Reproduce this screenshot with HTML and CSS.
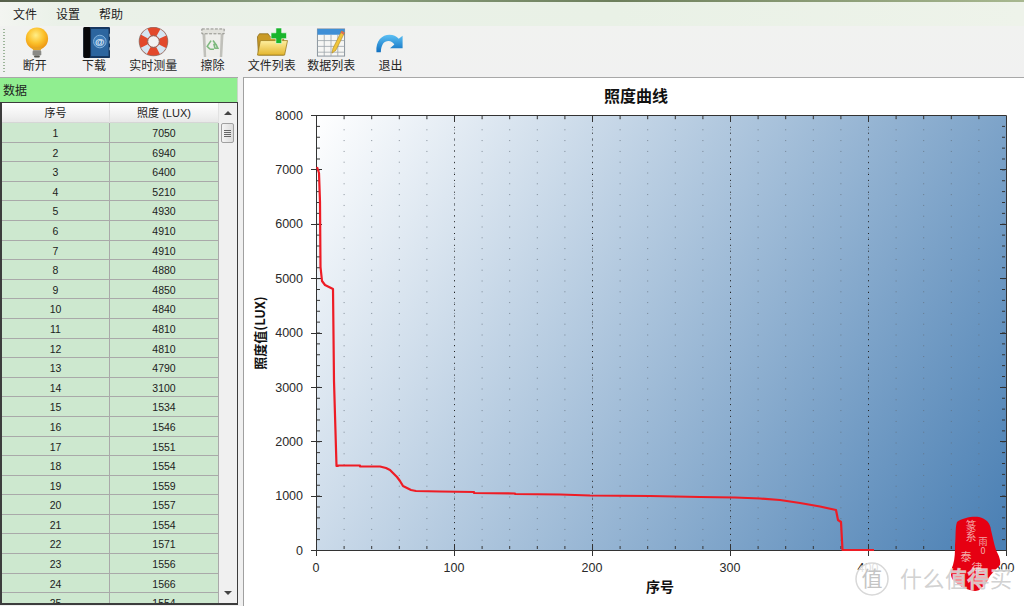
FILE: index.html
```html
<!DOCTYPE html>
<html lang="zh">
<head>
<meta charset="utf-8">
<title>照度曲线</title>
<link rel="stylesheet" href="styles.css">
</head>
<body>
<div class="app">
  <div class="topstrip"></div>
  <nav class="menubar"><span>文件</span><span>设置</span><span>帮助</span></nav>
  <div class="toolbar">
    <div class="grip"></div>
    <div class="tool">
      <svg class="icon" viewBox="0 0 32 32"><defs><radialGradient id="bulb" cx=".45" cy=".35" r=".65"><stop offset="0" stop-color="#ffee88"/><stop offset=".55" stop-color="#fcc22c"/><stop offset="1" stop-color="#ec9410"/></radialGradient></defs><circle cx="18" cy="12" r="11.500" fill="url(#bulb)"/><path d="M13 21h10l-1 3h-8z" fill="#e5a526"/><rect x="13.500" y="24" width="9" height="5.500" rx="1.500" fill="#8a8a86"/><rect x="15" y="29.500" width="6" height="2" rx="1" fill="#55554f"/></svg>
      <span>断开</span>
    </div>
    <div class="tool">
      <svg class="icon" viewBox="-5 0 32 32"><rect x="0" y="0" width="28" height="32" rx="2" fill="#16365e"/><rect x="0" y="0" width="7" height="32" rx="1.500" fill="#08080a"/><rect x="8" y="2" width="18" height="28" fill="#2c659f"/><circle cx="17" cy="15" r="6.500" fill="#3d7cb8" stroke="#86b4dc"/><text class="at" x="17" y="18.500">@</text><path d="M27.500 7v3M27.500 14v3M27.500 21v3" stroke="#a6b6c4" stroke-width="1.500"/></svg>
      <span>下载</span>
    </div>
    <div class="tool">
      <svg class="icon" viewBox="0 0 32 32"><circle cx="16.500" cy="15" r="10.500" fill="none" stroke="#8d7f78" stroke-width="9.500"/><circle cx="16.500" cy="15" r="10.500" fill="none" stroke="#e2492c" stroke-width="8"/><circle cx="16.500" cy="15" r="10.500" fill="none" stroke="#d5e6f2" stroke-width="8" stroke-dasharray="6.500 9.990" stroke-dashoffset="-5"/><circle cx="16.500" cy="15" r="6" fill="#f2f2f2" stroke="#9c5648"/></svg>
      <span>实时测量</span>
    </div>
    <div class="tool">
      <svg class="icon" viewBox="0 0 32 32"><path d="M5 5h22l-1.500 26H6.500z" fill="#eeeeea"/><path d="M5 5l1.500 26h2.500L8 6zM27 5l-1.500 26H23L24 6z" fill="#c0c0ba"/><path d="M4.500 2h23v5h-23z" fill="#e2e2dc" stroke="#8e8e88" stroke-dasharray="3 1.500"/><path d="M16 14l3 4h-2l1 4h3l-2-4M13 23l-3-3 4-6M13 23h4" fill="none" stroke="#7db97d" stroke-width="1.600"/></svg>
      <span>擦除</span>
    </div>
    <div class="tool">
      <svg class="icon" viewBox="0 0 32 32"><defs><linearGradient id="folder" x1="0" y1="0" x2="0" y2="1"><stop offset="0" stop-color="#fff0a0"/><stop offset="1" stop-color="#e3b52e"/></linearGradient></defs><path d="M1 10l2-3h9l2 3h14v19H2z" fill="#c99a26" stroke="#8a6b18" stroke-width=".8"/><path d="M1 29l3-15h28l-3 15z" fill="url(#folder)" stroke="#9a7a1c" stroke-width=".8"/><path d="M20 1h6v5h5v6h-5v5h-6v-5h-5V6h5z" fill="#19b52c" stroke="#fff" stroke-width=".6"/></svg>
      <span>文件列表</span>
    </div>
    <div class="tool">
      <svg class="icon" viewBox="0 0 32 32"><rect x="2" y="2" width="28" height="28" fill="#f6f6f4" stroke="#88929c"/><rect x="2" y="2" width="28" height="6" fill="#3f8fd6"/><path d="M2 14h28M2 20h28M2 26h28M9 8v22M16 8v22M23 8v22" stroke="#9aa2a8" stroke-width=".8"/><path d="M27 4l3 2-9 18-4 3 1-5z" fill="#f0c53c" stroke="#a8821c" stroke-width=".6"/><path d="M27 4l3 2-1 2-3-2z" fill="#e06a5a"/></svg>
      <span>数据列表</span>
    </div>
    <div class="tool">
      <svg class="icon" viewBox="0 0 32 32"><defs><linearGradient id="arrow" x1="0" y1="0" x2="0" y2="1"><stop offset="0" stop-color="#5cc0f4"/><stop offset="1" stop-color="#0f6fc0"/></linearGradient></defs><path d="M2 26C1 14 8 8 15.500 8c4 0 7 1.500 9.500 4l4-3v13H16l4.500-4c-1.500-2-3.500-3.500-6-3.500-5 0-7.500 4-8 11.500z" fill="url(#arrow)"/></svg>
      <span>退出</span>
    </div>
  </div>
  <main class="content">
    <aside class="left">
      <h2 class="left-title">数据</h2>
      <div class="grid-box">
        <div class="grid">
          <div class="row head"><span>序号</span><span>照度 (LUX)</span></div>
          <div class="row"><span>1</span><span>7050</span></div>
          <div class="row"><span>2</span><span>6940</span></div>
          <div class="row"><span>3</span><span>6400</span></div>
          <div class="row"><span>4</span><span>5210</span></div>
          <div class="row"><span>5</span><span>4930</span></div>
          <div class="row"><span>6</span><span>4910</span></div>
          <div class="row"><span>7</span><span>4910</span></div>
          <div class="row"><span>8</span><span>4880</span></div>
          <div class="row"><span>9</span><span>4850</span></div>
          <div class="row"><span>10</span><span>4840</span></div>
          <div class="row"><span>11</span><span>4810</span></div>
          <div class="row"><span>12</span><span>4810</span></div>
          <div class="row"><span>13</span><span>4790</span></div>
          <div class="row"><span>14</span><span>3100</span></div>
          <div class="row"><span>15</span><span>1534</span></div>
          <div class="row"><span>16</span><span>1546</span></div>
          <div class="row"><span>17</span><span>1551</span></div>
          <div class="row"><span>18</span><span>1554</span></div>
          <div class="row"><span>19</span><span>1559</span></div>
          <div class="row"><span>20</span><span>1557</span></div>
          <div class="row"><span>21</span><span>1554</span></div>
          <div class="row"><span>22</span><span>1571</span></div>
          <div class="row"><span>23</span><span>1556</span></div>
          <div class="row"><span>24</span><span>1566</span></div>
          <div class="row"><span>25</span><span>1554</span></div>
        </div>
        <div class="scrollbar">
          <div class="sb-btn"><i class="arrow-up"></i></div>
          <div class="sb-thumb"><i></i><i></i><i></i><i></i></div>
          <div class="sb-track"></div>
          <div class="sb-btn"><i class="arrow-down"></i></div>
        </div>
      </div>
    </aside>
    <section class="chart">
      <svg class="plot" viewBox="244 78 780 528">
        <defs>
          <linearGradient id="bg" gradientUnits="userSpaceOnUse" x1="316" y1="115" x2="996" y2="550"><stop offset="0" stop-color="#ffffff"/><stop offset="1" stop-color="#4b80b4"/></linearGradient>
          <pattern id="dots" patternUnits="userSpaceOnUse" x="316" y="118.500" width="27.600" height="10.800"><rect width="1" height="1" fill="#5f6a76" fill-opacity=".75"/></pattern>
          <pattern id="ytick" patternUnits="userSpaceOnUse" x="0" y="115" width="10" height="10.875"><rect width="10" height="1" fill="#333"/></pattern>
          <pattern id="xtick" patternUnits="userSpaceOnUse" x="316" y="0" width="27.600" height="10"><rect width="1" height="10" fill="#333"/></pattern>
        </defs>
        <text class="title" x="636" y="102">照度曲线</text>
        <rect x="316" y="115" width="690" height="435" fill="url(#bg)"/>
        <rect x="317" y="116" width="688" height="433" fill="url(#dots)"/>
        <path class="major" d="M454.500 115V550M592.500 115V550M730.500 115V550M868.500 115V550"/>
        <rect x="317" y="115" width="3" height="435" fill="url(#ytick)"/>
        <rect x="1002" y="115" width="3" height="435" fill="url(#ytick)"/>
        <rect x="316" y="116" width="690" height="3" fill="url(#xtick)"/>
        <rect x="316" y="546" width="690" height="3" fill="url(#xtick)"/>
        <path class="axis" d="M316.500 115.500H1006.500V550.500H316.500Z"/>
        <path class="axis" d="M311 115.500H322M311 169.500H322M311 224.500H322M311 278.500H322M311 333.500H322M311 387.500H322M311 441.500H322M311 496.500H322M311 550.500H322M1000 169.500H1006M1000 224.500H1006M1000 278.500H1006M1000 333.500H1006M1000 387.500H1006M1000 441.500H1006M1000 496.500H1006"/>
        <path class="axis" d="M316.500 544V556M454.500 544V556M592.500 544V556M730.500 544V556M868.500 544V556M1006.500 544V556M454.500 115V122M592.500 115V122M730.500 115V122M868.500 115V122"/>
        <polyline class="curve" points="317,167 319,173 320,202 320.500,267 322,281 325,285 333,289 334,381 336.500,466 338,466 338,465.500 360,465.500 360,466.500 380,466.500 386,468 390,470 393,473 397,477 400,481 403,486 407,488 411,490 416,491 440,491.500 474,492 474,493 515,493.500 515,494 560,494.500 590,495.500 650,496 700,497 735,497.500 760,498.500 780,500 800,503 820,506.500 836,510 838,520 841,522 842.500,550 874,550"/>
        <text class="ytl" x="303" y="119.500">8000</text>
        <text class="ytl" x="303" y="173.500">7000</text>
        <text class="ytl" x="303" y="228">6000</text>
        <text class="ytl" x="303" y="282.500">5000</text>
        <text class="ytl" x="303" y="337">4000</text>
        <text class="ytl" x="303" y="391.500">3000</text>
        <text class="ytl" x="303" y="445.500">2000</text>
        <text class="ytl" x="303" y="500">1000</text>
        <text class="ytl" x="303" y="554.500">0</text>
        <text class="xtl" x="316" y="572">0</text>
        <text class="xtl" x="454" y="572">100</text>
        <text class="xtl" x="592" y="572">200</text>
        <text class="xtl" x="730" y="572">300</text>
        <text class="xtl" x="868" y="572">400</text>
        <text class="xtl" x="1004" y="572">500</text>
        <text class="axtitle sm" x="660" y="592">序号</text>
        <text class="axtitle" transform="translate(265 333) rotate(-90)">照度值(LUX)</text>
        <path class="seal" d="M957 522C962 518 972 516 979 517C986 519 990 522 991 530C993 538 994 544 996 550C999 556 1001 560 1000 565C996 570 990 574 988 580C985 586 980 591 975 591C968 590 962 588 955 582C950 578 950 572 953 565C955 558 955 552 955 545C956 536 955 528 957 522Z"/>
        <text class="sealtxt tall" x="971" y="530">篆</text>
        <text class="sealtxt tall" x="971" y="541">系</text>
        <text class="sealtxt" x="983" y="545">雨</text>
        <text class="sealtxt" x="983" y="554">0</text>
        <text class="sealtxt tall" x="966" y="561">泰</text>
        <text class="sealtxt tall" x="977" y="572">律</text>
        <circle class="wm-circle" cx="872" cy="579" r="16"/>
        <text class="wm-val" x="872" y="586">值</text>
        <text class="wm-text" x="900" y="587">什么值得买</text>
      </svg>
    </section>
  </main>
</div>
</body>
</html>
```

FILE: styles.css
```css
* { box-sizing: border-box; }
html, body { margin: 0; padding: 0; }
body {
  width: 1024px;
  height: 606px;
  overflow: hidden;
  background: #f0f0f0;
  color: #222;
  font: 12px "Noto Sans CJK SC", "Liberation Sans", sans-serif;
}
.app { display: flex; flex-direction: column; height: 606px; }
.topstrip { height: 2px; background: linear-gradient(90deg, #56604a, #8fa584 30%, #6d7f5c 60%, #a8b890); }
.menubar {
  height: 24px;
  display: flex;
  gap: 19px;
  align-items: center;
  padding: 0 0 0 13px;
  line-height: 1;
  background: linear-gradient(90deg, #f3f5f1 0, #eaf1e8 60px, #e9f1e6 60%, #eef3ea);
}
.toolbar {
  height: 51px;
  display: flex;
  align-items: flex-start;
  padding: 1px 0 0 3px;
  background: linear-gradient(#f1f2f0, #f1f1f1);
}
.grip { width: 2px; height: 43px; margin: 2px 0 0; background: repeating-linear-gradient(#9db59a 0 1px, transparent 1px 3px); }
.tool {
  width: 59.300px;
  display: flex;
  flex-direction: column;
  align-items: center;
  line-height: 15px;
}
.icon { width: 32px; height: 31px; display: block; flex: none; }
.tool span { margin-top: -1px; color: #262626; white-space: nowrap; }
.at { font: 700 10px "Liberation Sans", sans-serif; text-anchor: middle; fill: #e4f0fa; }
.content { flex: 1; display: flex; min-height: 0; }
.left {
  flex: none;
  width: 238px;
  padding-bottom: 1px;
  display: flex;
  flex-direction: column;
  border-top: 1px solid #a8a8a8;
}
.left-title {
  margin: 0;
  height: 24px;
  padding: 0 3px;
  font-size: 12px;
  font-weight: 400;
  line-height: 23px;
  background: #90ee90;
  border-right: 1px solid #c8d8c8;
}
.grid-box {
  flex: 1;
  min-height: 0;
  display: flex;
  border: 1px solid #3c3c3c;
  border-width: 1px 1px 2px 2px;
  overflow: hidden;
  background: #f0f0f0;
}
.grid { width: 217px; display: flex; flex-direction: column; overflow: hidden; }
.row {
  flex: none;
  height: 19.600px;
  display: grid;
  grid-template-columns: 108px 109px;
  background: #cde8cf;
  font: 10.500px/19px "Liberation Sans", "Noto Sans CJK SC", sans-serif;
  color: #1c1c1c;
  text-align: center;
  border-bottom: 1px solid #a9a9a9;
}
.row span { border-right: 1px solid #a9a9a9; padding-top: 1px; }
.row.head {
  height: 20px;
  background: linear-gradient(#ffffff, #f2f2f2 60%, #e8e8e8);
  font-size: 11px;
  border-bottom: 1px solid #d6d6d6;
  line-height: 19px;
}
.row.head span { border-right: 1px solid #e2e2e2; }
.scrollbar { width: 17px; display: flex; flex-direction: column; background: #f0f0f0; }
.sb-btn { height: 20px; flex: none; display: flex; align-items: center; justify-content: center; }
.sb-btn i { width: 0; height: 0; border-left: 4px solid transparent; border-right: 4px solid transparent; }
.arrow-up { border-bottom: 4px solid #444; }
.arrow-down { border-top: 4px solid #444; }
.sb-thumb {
  height: 20px;
  flex: none;
  margin: 0 2px;
  display: flex;
  flex-direction: column;
  align-items: center;
  justify-content: center;
  gap: 1px;
  background: linear-gradient(90deg, #f4f4f4, #dcdcdc);
  border: 1px solid #a0a0a0;
  border-radius: 2px;
}
.sb-thumb i { width: 7px; height: 1px; background: #666; }
.sb-track { flex: 1; }
.chart {
  flex: 1;
  margin-left: 5px;
  border-left: 1px solid #a0a0a0;
  border-top: 1px solid #a8a8a8;
  background: #fff;
  overflow: hidden;
}
.plot { display: block; width: 780px; height: 528px; }
.title { font: 700 16px "Noto Sans CJK SC", sans-serif; text-anchor: middle; fill: #111; }
.ytl, .xtl { font: 12.500px "Liberation Sans", sans-serif; fill: #2a2a2a; }
.ytl { text-anchor: end; }
.xtl { text-anchor: middle; }
.axtitle { font: 700 13px "Noto Sans CJK SC", "Liberation Sans", sans-serif; text-anchor: middle; fill: #111; }
.axtitle.sm { font-size: 14px; }
.major { stroke: #222; stroke-dasharray: 1 4.900; fill: none; }
.axis { stroke: #333; fill: none; }
.curve { stroke: #ee1c25; stroke-width: 2.200; fill: none; stroke-linejoin: round; }
.seal { fill: #e60012; }
.sealtxt { font: 9px "Noto Sans CJK SC", sans-serif; text-anchor: middle; fill: #f3a9a9; }
.sealtxt.tall { font-size: 11px; }
.wm-circle { fill: rgba(255,255,255,.85); stroke: #d8d8d8; stroke-width: 1.500; }
.wm-val { font: 400 21px "Noto Sans CJK SC", sans-serif; text-anchor: middle; fill: #c4c4c4; }
.wm-text {
  font: 400 22px "Noto Sans CJK SC", sans-serif;
  letter-spacing: .500px;
  fill: #cccccc;
  fill-opacity: .9;
  stroke: #fff;
  stroke-opacity: .7;
  stroke-width: 1.500px;
  paint-order: stroke;
}
```
